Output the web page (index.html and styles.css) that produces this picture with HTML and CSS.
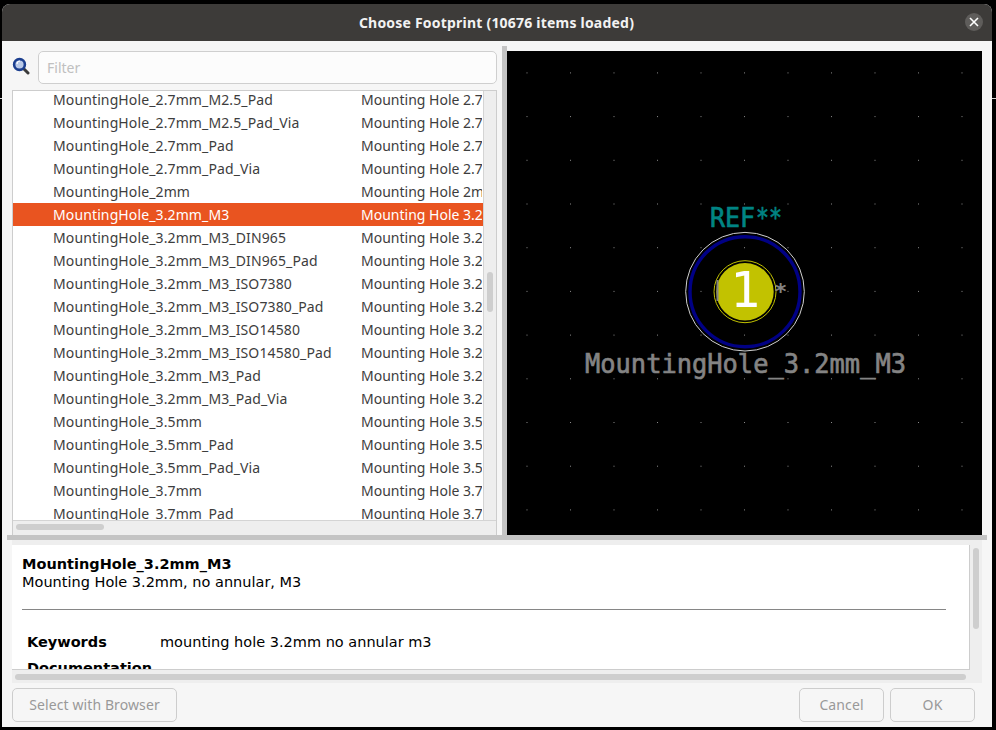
FILE: index.html
```html
<!DOCTYPE html>
<html lang="en">
<head>
<meta charset="utf-8">
<title>Choose Footprint</title>
<link rel="stylesheet" href="styles.css">
</head>
<body>
<div class="desk-line"></div>
<div class="window">
  <header class="titlebar">
    <span class="title">Choose Footprint (10676 items loaded)</span>
    <span class="close"><svg width="10" height="10" viewBox="0 0 10 10"><path d="M1 1L9 9M9 1L1 9" stroke="#fff" stroke-width="1.6"/></svg></span>
  </header>
  <div class="body">
    <div class="top">
      <div class="left">
        <div class="filter-row">
          <svg class="search" width="18" height="18" viewBox="0 0 18 18">
            <path d="M11 11L16 16" stroke="#3a3a3a" stroke-width="3" stroke-linecap="round"/>
            <circle cx="7.5" cy="7.5" r="5.4" fill="#b9c9e8" stroke="#1c3f8f" stroke-width="2.6"/>
            <path d="M5 7a3 3 0 0 1 3-3" stroke="#fff" stroke-width="1.2" fill="none"/>
          </svg>
          <div class="filter">Filter</div>
        </div>
        <div class="listbox">
          <div class="list-main">
            <div class="rows">
              <div class="row"><span class="n">MountingHole_2.7mm_M2.5_Pad</span><span class="d">Mounting Hole 2.7</span></div>
              <div class="row"><span class="n">MountingHole_2.7mm_M2.5_Pad_Via</span><span class="d">Mounting Hole 2.7</span></div>
              <div class="row"><span class="n">MountingHole_2.7mm_Pad</span><span class="d">Mounting Hole 2.7</span></div>
              <div class="row"><span class="n">MountingHole_2.7mm_Pad_Via</span><span class="d">Mounting Hole 2.7</span></div>
              <div class="row"><span class="n">MountingHole_2mm</span><span class="d">Mounting Hole 2mm</span></div>
              <div class="row sel"><span class="n">MountingHole_3.2mm_M3</span><span class="d">Mounting Hole 3.2</span></div>
              <div class="row"><span class="n">MountingHole_3.2mm_M3_DIN965</span><span class="d">Mounting Hole 3.2</span></div>
              <div class="row"><span class="n">MountingHole_3.2mm_M3_DIN965_Pad</span><span class="d">Mounting Hole 3.2</span></div>
              <div class="row"><span class="n">MountingHole_3.2mm_M3_ISO7380</span><span class="d">Mounting Hole 3.2</span></div>
              <div class="row"><span class="n">MountingHole_3.2mm_M3_ISO7380_Pad</span><span class="d">Mounting Hole 3.2</span></div>
              <div class="row"><span class="n">MountingHole_3.2mm_M3_ISO14580</span><span class="d">Mounting Hole 3.2</span></div>
              <div class="row"><span class="n">MountingHole_3.2mm_M3_ISO14580_Pad</span><span class="d">Mounting Hole 3.2</span></div>
              <div class="row"><span class="n">MountingHole_3.2mm_M3_Pad</span><span class="d">Mounting Hole 3.2</span></div>
              <div class="row"><span class="n">MountingHole_3.2mm_M3_Pad_Via</span><span class="d">Mounting Hole 3.2</span></div>
              <div class="row"><span class="n">MountingHole_3.5mm</span><span class="d">Mounting Hole 3.5</span></div>
              <div class="row"><span class="n">MountingHole_3.5mm_Pad</span><span class="d">Mounting Hole 3.5</span></div>
              <div class="row"><span class="n">MountingHole_3.5mm_Pad_Via</span><span class="d">Mounting Hole 3.5</span></div>
              <div class="row"><span class="n">MountingHole_3.7mm</span><span class="d">Mounting Hole 3.7</span></div>
              <div class="row"><span class="n">MountingHole_3.7mm_Pad</span><span class="d">Mounting Hole 3.7</span></div>
            </div>
            <div class="vtrack"><div class="vthumb"></div></div>
          </div>
          <div class="htrack"><div class="hthumb"></div></div>
        </div>
      </div>
      <div class="vsash"></div>
      <svg class="canvas" width="475" height="484" viewBox="507 51 475 484">
        <defs>
          <pattern id="grid" x="700.5" y="203.5" width="43.5" height="43.7" patternUnits="userSpaceOnUse">
            <rect width="1" height="1" fill="#8a8a8a"/>
          </pattern>
        </defs>
        <rect x="507" y="51" width="475" height="484" fill="#000"/>
        <rect x="507" y="51" width="475" height="484" fill="url(#grid)"/>
        <circle cx="745" cy="291.7" r="59.3" fill="none" stroke="#cfcfcf" stroke-width="1"/>
        <circle cx="745" cy="291.7" r="55" fill="none" stroke="#000084" stroke-width="3.4"/>
        <circle cx="745" cy="291.7" r="31" fill="none" stroke="#c2c200" stroke-width="1"/>
        <circle cx="745" cy="291.7" r="28.7" fill="#c2c200"/>
        <rect x="716.5" y="280" width="2" height="21" fill="#848484"/>
        <text class="pad-num" x="745" y="307">1</text>
        <text class="ref" x="710" y="227" textLength="45" lengthAdjust="spacingAndGlyphs">REF</text>
        <text class="ref" x="756" y="227" textLength="26" lengthAdjust="spacingAndGlyphs">**</text>
        <text class="star" x="774" y="299">*</text>
        <text class="val" x="585" y="373" textLength="321" lengthAdjust="spacingAndGlyphs">MountingHole_3.2mm_M3</text>
      </svg>
    </div>
    <div class="hsash"></div>
    <div class="details">
      <div class="details-row">
        <div class="html">
          <div class="html-inner">
            <div class="fp-name">MountingHole_3.2mm_M3</div>
            <div class="fp-desc">Mounting Hole 3.2mm, no annular, M3</div>
            <div class="rule"></div>
            <div class="kv"><span class="k">Keywords</span><span class="v">mounting hole 3.2mm no annular m3</span></div>
            <div class="kv doc"><span class="k">Documentation</span></div>
          </div>
        </div>
        <div class="dv-track"><div class="dv-thumb"></div></div>
      </div>
      <div class="dh-track"><div class="dh-thumb"></div></div>
    </div>
    <div class="buttons">
      <button class="btn browser" disabled>Select with Browser</button>
      <span class="spacer"></span>
      <button class="btn act" disabled>Cancel</button>
      <button class="btn act" disabled>OK</button>
    </div>
  </div>
</div>
</body>
</html>
```
FILE: styles.css
```css
* { box-sizing: border-box; }
html, body { margin: 0; height: 100%; }
body {
  background: #000;
  width: 996px;
  height: 730px;
  overflow: hidden;
  padding: 4px 4px 3px 2px;
  position: relative;
  font-family: "Noto Sans", sans-serif;
}
.desk-line {
  position: absolute;
  left: 0;
  right: 0;
  top: 98px;
  height: 1px;
  background: #d8d8d8;
}
.window {
  position: relative;
  width: 990px;
  height: 723px;
  background: #f6f6f6;
  border-radius: 8px 8px 0 0;
  overflow: hidden;
  display: flex;
  flex-direction: column;
}
.titlebar {
  height: 37px;
  flex: none;
  background: #3d3b39;
  display: flex;
  align-items: center;
  justify-content: center;
  position: relative;
}
.title {
  color: #f2f2f2;
  font-size: 14px;
  font-weight: 700;
  letter-spacing: 0.21px;
  margin-left: -1px;
}
.close {
  position: absolute;
  right: 9px;
  top: 9px;
  width: 18px;
  height: 18px;
  border-radius: 50%;
  background: #5f5d5b;
  display: flex;
  align-items: center;
  justify-content: center;
}
.body { flex: 1; display: flex; flex-direction: column; }
.top { display: flex; height: 494px; flex: none; padding-left: 5px; }
.left { width: 495px; flex: none; display: flex; flex-direction: column; }
.filter-row {
  display: flex;
  align-items: center;
  height: 33px;
  margin-top: 10px;
  padding-left: 5px;
  padding-right: 5px;
  gap: 8px;
}
.search { flex: none; margin-top: -3px; }
.filter {
  flex: 1;
  height: 33px;
  border: 1px solid #cfcfcf;
  border-radius: 5px;
  background: #fcfcfc;
  color: #c0c0c0;
  font-size: 14px;
  line-height: 31px;
  padding-left: 8px;
}
.listbox {
  margin: 6px 5px 0 5px;
  height: 445px;
  border: 1px solid #cdcdcd;
  border-bottom: 0;
  background: #eeeeee;
  display: flex;
  flex-direction: column;
}
.list-main { height: 430px; flex: none; display: flex; border-bottom: 1px solid #d4d4d4; }
.rows {
  width: 470px;
  flex: none;
  height: 100%;
  overflow: hidden;
  background: #fff;
  padding-top: 0;
}
.rows .row:first-child { margin-top: -3px; }
.row {
  height: 23px;
  display: flex;
  color: #3d3d3d;
  font-size: 14px;
  line-height: 23px;
  white-space: nowrap;
}
.row.sel { background: #e95420; color: #fff; }
.n { width: 348px; padding-left: 40px; flex: none; overflow: hidden; letter-spacing: 0.12px; }
.d { width: 121px; flex: none; overflow: hidden; }
.vtrack {
  flex: 1;
  border-left: 1px solid #d4d4d4;
  position: relative;
}
.vthumb {
  position: absolute;
  left: 3px;
  top: 181px;
  width: 6px;
  height: 40px;
  border-radius: 3px;
  background: #cecece;
}
.htrack { flex: 1; position: relative; }
.hthumb {
  position: absolute;
  left: 3px;
  top: 3px;
  width: 88px;
  height: 6px;
  border-radius: 3px;
  background: #cecece;
}
.vsash { width: 5px; flex: none; background: #c4c4c4; margin-top: 5px; }
.canvas { display: block; flex: none; margin-top: 10px; }
.ref {
  fill: #008484;
  stroke: #008484;
  stroke-width: 0.7px;
  font-family: "DejaVu Sans Mono", monospace;
  font-size: 26px;
}
.star {
  fill: #848484;
  font-family: "DejaVu Sans Mono", monospace;
  font-size: 22px;
  font-weight: 700;
}
.pad-num {
  fill: #fff;
  font-family: "DejaVu Sans Mono", monospace;
  font-size: 50px;
  text-anchor: middle;
}
.val {
  fill: #848484;
  stroke: #848484;
  stroke-width: 0.7px;
  font-family: "DejaVu Sans Mono", monospace;
  font-size: 27px;
}
.hsash { height: 5px; flex: none; background: #c4c4c4; margin: 0 5px; }
.details {
  height: 143px;
  flex: none;
  margin-left: 10px;
  width: 970px;
  padding-top: 5px;
  background: #eeeeee;
  margin-top: 0;
  display: flex;
  flex-direction: column;
}
.details-row { display: flex; height: 125px; flex: none; }
.html {
  width: 958px;
  flex: none;
  background: #fff;
  border-right: 1px solid #cdcdcd;
  border-bottom: 1px solid #cdcdcd;
  overflow: hidden;
  font-family: "DejaVu Sans", sans-serif;
  font-size: 14.5px;
  color: #000;
}
.html-inner { padding: 11px 23px 0 10px; }
.fp-name { font-weight: 700; line-height: 17px; }
.fp-desc { line-height: 18px; }
.rule { height: 1px; background: #868686; margin-top: 18px; }
.kv { display: flex; padding-left: 5px; margin-top: 24px; line-height: 17px; }
.kv.doc { margin-top: 9px; }
.k { width: 133px; font-weight: 700; flex: none; }
.dv-track { flex: 1; position: relative; }
.dv-thumb {
  position: absolute;
  left: 3px;
  top: 3px;
  width: 6px;
  height: 81px;
  border-radius: 3px;
  background: #cecece;
}
.dh-track { flex: 1; position: relative; }
.dh-thumb {
  position: absolute;
  left: 3px;
  top: 4px;
  width: 951px;
  height: 6px;
  border-radius: 3px;
  background: #cecece;
}
.buttons {
  display: flex;
  padding: 5px 17px 0 10px;
  gap: 6px;
}
.btn {
  height: 34px;
  border: 1px solid #cdcdcd;
  border-radius: 5px;
  background: #f6f6f6;
  color: #999;
  font-family: "Noto Sans", sans-serif;
  font-size: 14px;
  letter-spacing: 0.1px;
  padding: 0 0 2px;
}
.browser { width: 165px; }
.act { width: 85px; }
.spacer { flex: 1; }
```
